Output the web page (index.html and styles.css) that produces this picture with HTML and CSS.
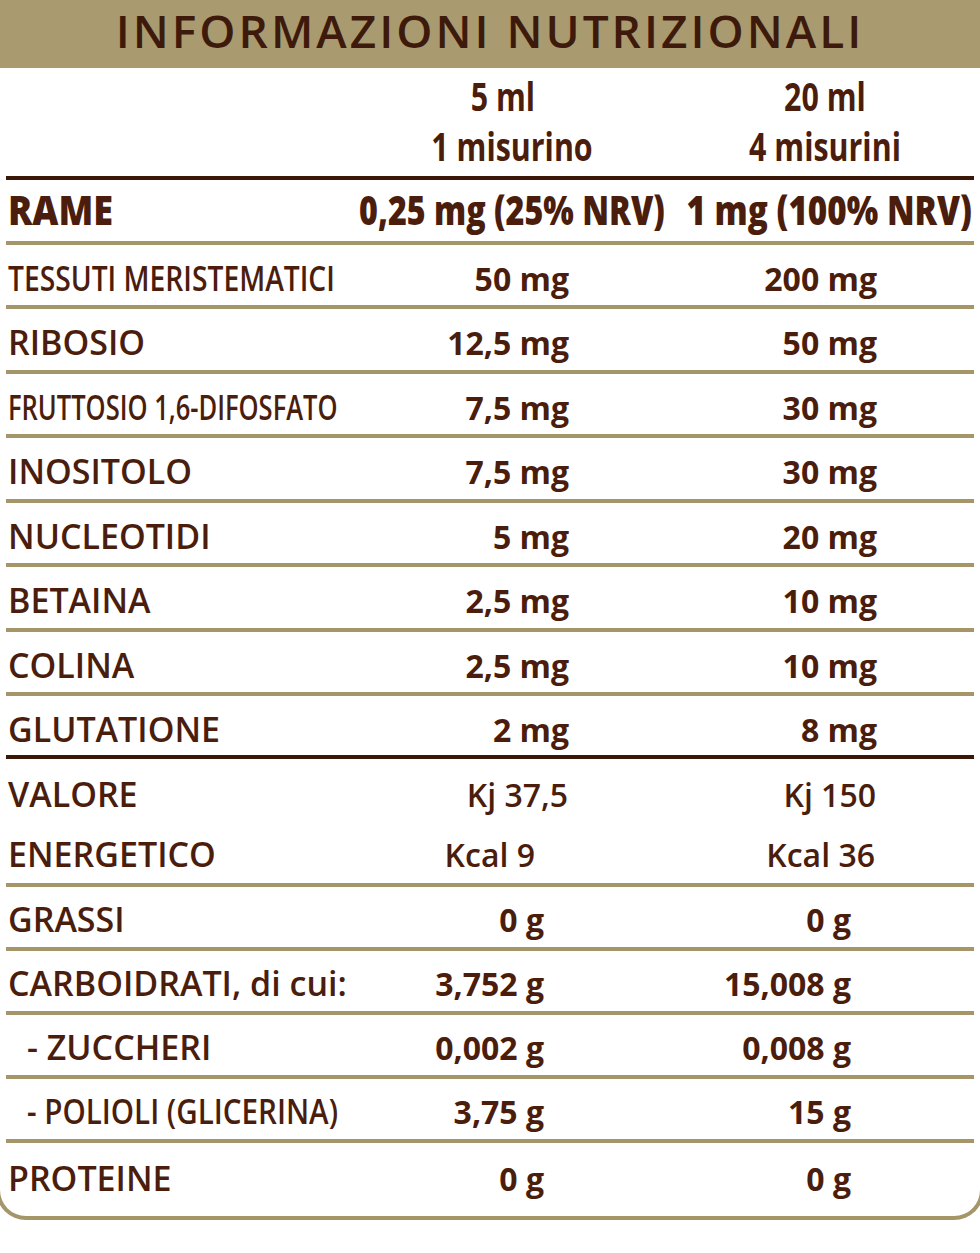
FILE: index.html
```html
<!DOCTYPE html>
<html lang="it">
<head>
<meta charset="utf-8">
<title>Informazioni nutrizionali</title>
<link rel="stylesheet" href="styles.css">
</head>
<body>
<div class="page">
  <div class="panel">
    <header class="title"><h1>INFORMAZIONI NUTRIZIONALI</h1></header>

    <div class="sizes">
      <div class="size"><span class="sx first">5 ml</span><span class="sx">1 misurino</span></div>
      <div class="size"><span class="sx">20 ml</span><span class="sx">4 misurini</span></div>
    </div>

    <div class="group group-a">
      <div class="row rame">
        <span class="label"><span class="sx">RAME</span></span>
        <span class="val"><span class="sx">0,25 mg (25% NRV)</span></span>
        <span class="val"><span class="sx">1 mg (100% NRV)</span></span>
      </div>
      <div class="row">
        <span class="label"><span class="sx tight">TESSUTI MERISTEMATICI</span></span>
        <span class="val">50 mg</span><span class="val">200 mg</span>
      </div>
      <div class="row">
        <span class="label">RIBOSIO</span>
        <span class="val">12,5 mg</span><span class="val">50 mg</span>
      </div>
      <div class="row">
        <span class="label"><span class="sx tighter">FRUTTOSIO 1,6-DIFOSFATO</span></span>
        <span class="val">7,5 mg</span><span class="val">30 mg</span>
      </div>
      <div class="row">
        <span class="label">INOSITOLO</span>
        <span class="val">7,5 mg</span><span class="val">30 mg</span>
      </div>
      <div class="row">
        <span class="label">NUCLEOTIDI</span>
        <span class="val">5 mg</span><span class="val">20 mg</span>
      </div>
      <div class="row">
        <span class="label">BETAINA</span>
        <span class="val">2,5 mg</span><span class="val">10 mg</span>
      </div>
      <div class="row">
        <span class="label">COLINA</span>
        <span class="val">2,5 mg</span><span class="val">10 mg</span>
      </div>
      <div class="row">
        <span class="label">GLUTATIONE</span>
        <span class="val">2 mg</span><span class="val">8 mg</span>
      </div>
    </div>

    <div class="group group-b">
      <div class="pair">
        <div class="row kj">
          <span class="label">VALORE</span>
          <span class="val">Kj 37,5</span><span class="val">Kj 150</span>
        </div>
        <div class="row kcal">
          <span class="label">ENERGETICO</span>
          <span class="val">Kcal 9</span><span class="val">Kcal 36</span>
        </div>
      </div>
      <div class="row grams">
        <span class="label">GRASSI</span>
        <span class="val">0 g</span><span class="val">0 g</span>
      </div>
      <div class="row grams">
        <span class="label">CARBOIDRATI, di cui:</span>
        <span class="val">3,752 g</span><span class="val">15,008 g</span>
      </div>
      <div class="row grams sub">
        <span class="label">- ZUCCHERI</span>
        <span class="val">0,002 g</span><span class="val">0,008 g</span>
      </div>
      <div class="row grams sub">
        <span class="label"><span class="sx tight2">- POLIOLI (GLICERINA)</span></span>
        <span class="val">3,75 g</span><span class="val">15 g</span>
      </div>
      <div class="row grams final">
        <span class="label">PROTEINE</span>
        <span class="val">0 g</span><span class="val">0 g</span>
      </div>
    </div>
  </div>
</div>
</body>
</html>
```

FILE: styles.css
```css
html, body {
  margin: 0;
  padding: 0;
  background: #ffffff;
}

.page {
  width: 980px;
  overflow: hidden;
  font-family: "Open Sans", "Liberation Sans", sans-serif;
  color: #4a1d0c;
}

.panel {
  margin: 0 -4px;
  border: 4px solid #a5966a;
  border-top: 0;
  border-radius: 0 0 30px 30px;
}

/* title band */
.title {
  height: 68px;
  background: #a99b6f;
  text-align: center;
}

.title h1 {
  margin: 0;
  font-size: 46px;
  font-weight: 600;
  line-height: 60px;
  letter-spacing: 3px;
  color: #3d1a0b;
}

/* scaled text helper */
.sx {
  display: inline-block;
  transform-origin: left center;
}

/* serving sizes */
.sizes {
  margin: 0 6px;
  height: 112px;
  box-sizing: border-box;
  border-bottom: 4px solid #3b1708;
  display: grid;
  grid-template-columns: 260px 260px;
  column-gap: 53px;
  padding: 3px 0 0 376px;
  font-size: 40px;
  font-weight: 700;
  line-height: 50px;
  text-align: center;
}

.size .sx {
  display: block;
  transform: scaleX(0.76);
  transform-origin: center center;
  white-space: nowrap;
}

.size .sx.first {
  padding-right: 24px;
}

/* rows */
.row {
  margin: 0 6px;
  height: 64.5px;
  box-sizing: border-box;
  border-bottom: 4px solid #a5966a;
  display: grid;
  grid-template-columns: minmax(0, 1fr) 200px 308px;
  align-items: baseline;
  padding: 16px 97px 0 2px;
  line-height: 1;
}

.label {
  font-size: 34px;
  font-weight: 600;
  white-space: nowrap;
}

.val {
  font-size: 32px;
  font-weight: 700;
  text-align: right;
  white-space: nowrap;
}

.tight { transform: scaleX(0.83); }
.tighter { transform: scaleX(0.75); }
.tight2 { transform: scaleX(0.87); }

/* copper row */
.row.rame {
  grid-template-columns: minmax(0, 1fr) 300px 307px;
  padding: 10px 2px 0 2px;
}

.rame .label,
.rame .val {
  font-size: 40px;
  font-weight: 800;
}

.rame .val {
  display: flex;
  justify-content: flex-end;
}

.rame .label .sx { transform: scaleX(0.9); }

.rame .val .sx {
  flex: none;
  transform: scaleX(0.83);
  transform-origin: right center;
}

.rame .val:nth-child(2) .sx { transform: scaleX(0.805); }

.group-a .row:last-child {
  height: 63px;
  border-bottom-color: #3b1708;
}

/* energy pair */
.pair {
  margin: 0 6px;
  border-bottom: 4px solid #a5966a;
}

.pair .row {
  margin: 0;
  height: 62px;
  border-bottom: 0;
}

.pair .row.kj { padding-top: 18px; }
.pair .row.kj .val:nth-child(2) { padding-right: 1px; }
.pair .row.kj .val:nth-child(3) { padding-right: 1px; }

.pair .row.kcal { padding-top: 16px; }
.pair .row.kcal .val:nth-child(2) { padding-right: 34px; }
.pair .row.kcal .val:nth-child(3) { padding-right: 2px; }

.pair .val { font-weight: 600; }

/* grams rows */
.group-b .row.grams {
  height: 64px;
  padding-top: 15px;
}

.row.grams .val:nth-child(2) { padding-right: 25px; }
.row.grams .val:nth-child(3) { padding-right: 26px; }

.row.sub .label { padding-left: 19px; }

.group-b .row.final {
  height: 73px;
  border-bottom: 0;
  padding-top: 18px;
}
```
